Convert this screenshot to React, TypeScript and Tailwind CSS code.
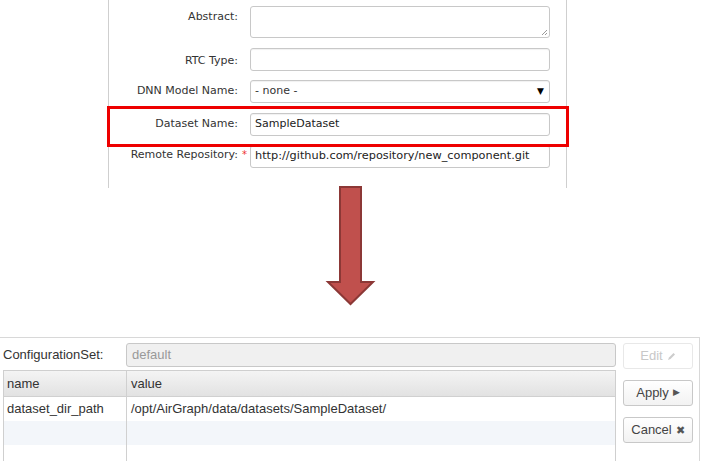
const top = "font-['DejaVu_Sans',sans-serif] text-[11px] text-[#333]";
const bot = "font-['Liberation_Sans',sans-serif] text-[13px] text-[#333]";

const Field: React.FC<{ label: string; req?: boolean; children: React.ReactNode; mt: string; lt?: string }> = ({ label, req, children, mt, lt = "pt-[5px]" }) => (
  <div className={`flex ${mt}`}>
    <div className={`w-[129px] text-right ${lt}`}>{label}</div>
    <div className="w-[12px] pl-[4px] pt-[2px] text-[#e33] text-[10px]">{req ? "*" : ""}</div>
    <div className="w-[300px]">{children}</div>
  </div>
);

const inputCls = "h-[23px] w-full rounded-[3px] border border-[#c8c8c8] bg-white px-[4px] flex items-center shadow-[inset_0_1px_1px_rgba(0,0,0,0.06)]";

const Btn: React.FC<{ children: React.ReactNode; disabled?: boolean }> = ({ children, disabled }) => (
  <div className={`h-[26px] w-[70px] rounded-[3px] border flex items-center justify-center gap-[4px] ${disabled ? "border-[#e8e8e8] bg-white text-[#c8c8c8]" : "border-[#c8c8c8] bg-gradient-to-b from-white to-[#f2f2f2] text-[#444]"}`}>
    {children}
  </div>
);

export default function App() {
  return (
    <div className="w-[702px] h-[461px] bg-white overflow-hidden">
      <div className={`relative ml-[108px] w-[459px] h-[188px] border-x border-[#cfcfcf] ${top}`}>
        <Field label="Abstract:" mt="pt-[6px]" lt="pt-[3px]">
          <div className="relative h-[32px] w-full rounded-[3px] border border-[#c8c8c8] bg-white">
            <svg className="absolute right-[1px] bottom-[1px]" width="8" height="8" viewBox="0 0 8 8">
              <path d="M7 2L2 7M7 5L5 7" stroke="#999" strokeWidth="1" />
            </svg>
          </div>
        </Field>
        <Field label="RTC Type:" mt="mt-[10px]">
          <div className={inputCls} />
        </Field>
        <Field label="DNN Model Name:" mt="mt-[9px]" lt="pt-[3px]">
          <div className={`${inputCls} justify-between`}>
            <span>- none -</span>
            <span className="text-[9px] text-black pr-[1px]">▼</span>
          </div>
        </Field>
        <Field label="Dataset Name:" mt="mt-[10px]" lt="pt-[3px]">
          <div className={`${inputCls} text-[11px] text-[#222]`}>SampleDataset</div>
        </Field>
        <Field label="Remote Repository:" req mt="mt-[9px]" lt="pt-[2px]">
          <div className={`${inputCls} text-[11.3px] text-[#222]`}>http://github.com/repository/new_component.git</div>
        </Field>
        <div className="absolute left-[-2px] top-[106px] w-[462px] h-[41px] border-[3px] border-[#ee0000]" />
      </div>

      <div className="h-[149px] flex justify-center">
        <svg width="60" height="120" viewBox="0 0 60 120" className="ml-[-2px] mt-[-2px]">
          <polygon points="20,1 41,1 41,96 53,96 30.5,118 8,96 20,96" fill="#c0504d" stroke="#8c3836" strokeWidth="2" strokeLinejoin="miter" />
        </svg>
      </div>

      <div className={`w-[700px] h-[124px] border-t border-r border-[#d8d8d8] flex gap-[7px] pl-[3px] pt-[5px] ${bot}`}>
        <div className="w-[613px] flex flex-col">
          <div className="flex items-center h-[24px]">
            <div className="w-[123px]">ConfigurationSet:</div>
            <div className="flex-1 h-[24px] rounded-[3px] border border-[#c8c8c8] bg-[#f0f0f0] px-[5px] flex items-center text-[#999]">default</div>
          </div>
          <div className="mt-[3px] flex-1 border-x border-t border-[#cfcfcf] flex flex-col">
            <div className="flex h-[26px] bg-gradient-to-b from-[#f4f4f4] to-[#e2e2e2] border-b border-[#d0d0d0]">
              <div className="w-[123px] border-r border-[#d0d0d0] px-[3px] flex items-center">name</div>
              <div className="flex-1 px-[4px] flex items-center">value</div>
            </div>
            <div className="flex h-[24px]">
              <div className="w-[123px] border-r border-[#d0d0d0] px-[3px] flex items-center">dataset_dir_path</div>
              <div className="flex-1 px-[4px] flex items-center">/opt/AirGraph/data/datasets/SampleDataset/</div>
            </div>
            <div className="flex h-[24px] bg-[#f3f6fa]">
              <div className="w-[123px] border-r border-[#d0d0d0]" />
              <div className="flex-1" />
            </div>
            <div className="flex flex-1">
              <div className="w-[123px] border-r border-[#d0d0d0]" />
              <div className="flex-1" />
            </div>
          </div>
        </div>
        <div className="flex flex-col gap-[11px]">
          <Btn disabled>
            Edit
            <svg width="9" height="9" viewBox="0 0 9 9"><path d="M1 8L2 5.5L6.5 1L8 2.5L3.5 7Z" fill="#ccc" /></svg>
          </Btn>
          <Btn>
            Apply <span className="text-[9px] text-[#555]">▶</span>
          </Btn>
          <Btn>
            Cancel <span className="text-[11px] text-[#555]">✖</span>
          </Btn>
        </div>
      </div>
    </div>
  );
}
